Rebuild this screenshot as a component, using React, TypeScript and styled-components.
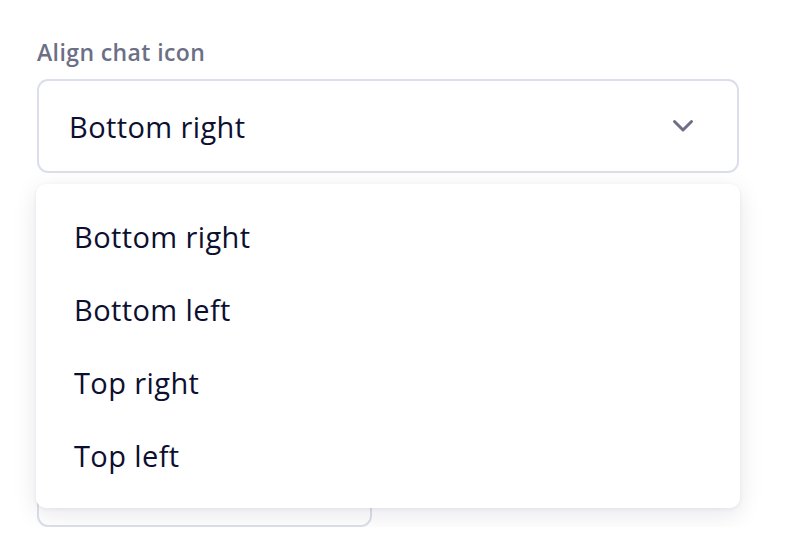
import React from 'react';
import styled, {createGlobalStyle} from 'styled-components';

const GlobalStyle = createGlobalStyle`
    body {
        margin: 0;
        background: #ffffff;
        font-family: 'Open Sans', 'Noto Sans', sans-serif;
    }
`

const options = ['Bottom right', 'Bottom left', 'Top right', 'Top left'];

export default function App() {
    return (
        <>
            <GlobalStyle/>
            <Page>
                <Field>
                    <Label>Align chat icon</Label>
                    <SelectWrap>
                        <Select>
                            <Value>Bottom right</Value>
                            <Chevron viewBox="0 0 24 24">
                                <path d="M3.5 8.5L12 17l8.5-8.5" fill="none" stroke="currentColor" strokeWidth="3"
                                      strokeLinecap="round" strokeLinejoin="round"/>
                            </Chevron>
                        </Select>
                        <Menu>
                            {options.map(o => (
                                <Option key={o}>{o}</Option>
                            ))}
                        </Menu>
                    </SelectWrap>
                </Field>
                <SmallBox/>
            </Page>
        </>
    );
}

const Page = styled.div`
    padding: 36px 0 0 37px;
    width: 702px;
`

const Field = styled.div`
    display: flex;
    flex-direction: column;
`

const Label = styled.div`
    font-size: 23px;
    font-weight: 600;
    letter-spacing: 0.4px;
    color: #6c6f86;
    line-height: 32px;
    margin-bottom: 11px;
`

const SelectWrap = styled.div`
    position: relative;
`

const Select = styled.div`
    box-sizing: border-box;
    height: 94px;
    border: 2px solid #dcdfeb;
    border-radius: 11px;
    display: flex;
    align-items: center;
    justify-content: space-between;
    padding: 0 42px 0 30px;
`

const Value = styled.span`
    font-size: 29px;
    letter-spacing: 0.4px;
    color: #0d0f30;
`

const Chevron = styled.svg`
    width: 24px;
    height: 24px;
    margin-top: -3px;
    color: #6c6f86;
`

const Menu = styled.div`
    position: absolute;
    top: 105px;
    left: -1px;
    right: -1px;
    background: #ffffff;
    border-radius: 10px;
    padding: 16px 0;
    box-shadow: 0 6px 24px rgba(20, 22, 60, 0.10), 0 1px 4px rgba(20, 22, 60, 0.06);
    z-index: 2;
`

const Option = styled.div`
    height: 73px;
    display: flex;
    align-items: center;
    padding-left: 38px;
    font-size: 29px;
    letter-spacing: 0.4px;
    color: #0d0f30;
`

const SmallBox = styled.div`
    box-sizing: border-box;
    margin-top: 260px;
    width: 335px;
    height: 94px;
    border: 2px solid #dcdfeb;
    border-radius: 11px;
`
